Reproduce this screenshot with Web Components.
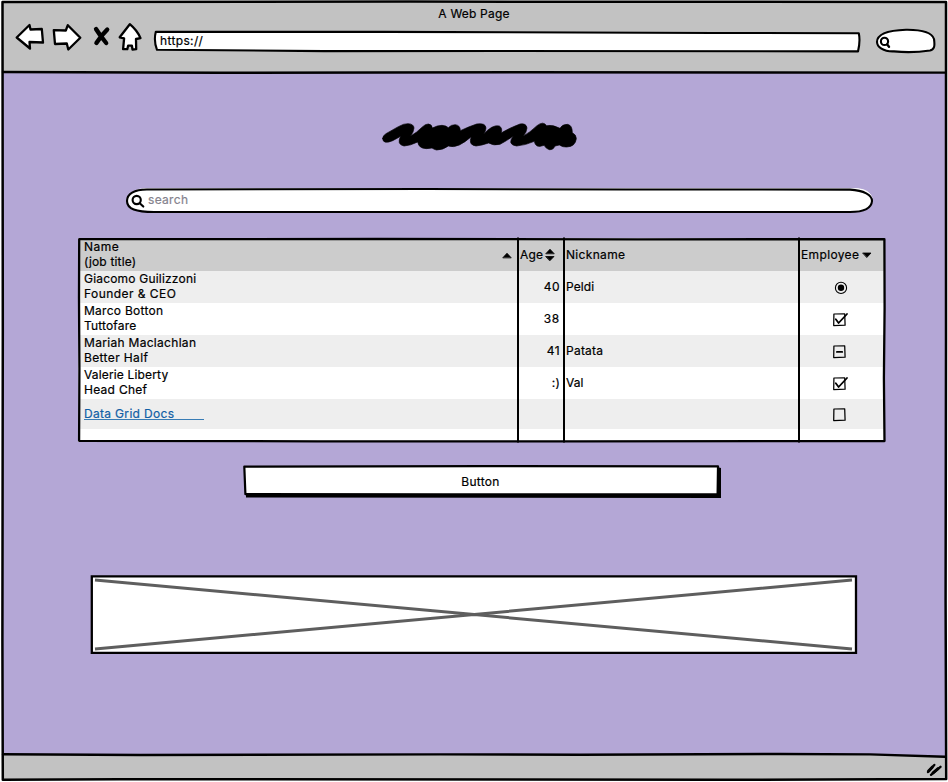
<!DOCTYPE html>
<html lang="en">
<head>
<meta charset="utf-8">
<title>A Web Page</title>
<style>
html,body{margin:0;padding:0}
body{width:948px;height:782px;overflow:hidden;background:#fff;color:#000;font:400 12px/15px Inter,"Liberation Sans",sans-serif}
</style>
</head>
<body>
<wire-browser>
  <fit-text slot="title" w="71">A Web Page</fit-text>
  <fit-text slot="url" w="43">https://</fit-text>
  <wire-scribble></wire-scribble>
  <wire-search><fit-text w="40">search</fit-text></wire-search>
  <wire-grid></wire-grid>
  <wire-button><fit-text w="38">Button</fit-text></wire-button>
  <wire-image></wire-image>
</wire-browser>
<script>
class WireElement extends HTMLElement {
  constructor() {
    super();
    this.attachShadow({ mode: 'open' }).innerHTML =
      '<style>:host,*{box-sizing:border-box}svg{display:block;overflow:visible;fill:none;stroke:#000;stroke-width:2.1;stroke-linecap:round;stroke-linejoin:round}.bg{position:absolute;left:0;top:0}' +
      this.constructor.css + '</style>' + this.constructor.html;
  }
}

/* Text label whose tracking is adjusted to fill the width in its "w" attribute. */
class FitText extends WireElement {
  static css = ':host{display:inline-block;position:relative;white-space:nowrap;line-height:15px;-webkit-text-stroke:.2px currentColor}span{display:inline-block}';
  static html = '<span><slot></slot></span>';
  connectedCallback() {
    requestAnimationFrame(() => this.fit());
    this.fit();
  }
  fit() {
    const w = +this.getAttribute('w');
    const s = this.shadowRoot.querySelector('span');
    const n = this.textContent.length;
    if (!w || !n) return;
    s.style.letterSpacing = '0';
    const natural = s.getBoundingClientRect().width;
    if (natural) s.style.letterSpacing = ((w + .3 - natural) / n).toFixed(3) + 'px';
  }
}

class WireBrowser extends WireElement {
  static css = `
  :host{display:grid;grid-template-rows:73px 682px 27px;position:relative;width:948px;height:782px}
  svg.bg{z-index:0}
  header,main,footer{position:relative}
  header{display:flex;flex-direction:column;align-items:center;padding-top:6px}
  nav{display:flex;width:100%;height:32px;padding-left:15px;align-items:flex-start;margin-top:2px}
  .icon{width:28px;height:30px;margin-right:9px;stroke-width:2.3}
  .icon.x{width:18px;margin:0 8px 0 3px}
  .icon.h{width:24px;margin-right:12px}
  .url{position:relative;width:707px;height:22px;margin-top:6px;padding:4px 0 0 6px;line-height:15px}
  .find{width:60px;height:26px;margin:5px 0 0 14px}
  main{display:flex;flex-direction:column}
  footer{display:flex;justify-content:flex-end;padding:7px 5px 0 0}`;
  static html = `
  <svg class="bg" width="948" height="782" viewBox="0 0 948 782">
    <path fill="#b4a7d6" stroke="none" d="M3 72H946V758H3z"/>
    <path fill="#c2c2c2" stroke="none" d="M3 2H946V72.5H3zM3 755L860 754L946 757V779.5H3z"/>
    <path stroke-width="2.5" d="M2.5 2L410 1.6L946 2L946 340L945.6 600L946.2 779L720 779.8L120 779.2L2.8 779.7L2.4 640L2.8 330z"/>
    <path stroke-width="2.4" d="M3 72L220 72.8L520 72.3L945 72.6M3 754.3L140 755L440 754.4L580 754.7L780 754L870 754.4L945 756.8"/>
  </svg>
  <header><slot name="title"></slot>
    <nav>
      <svg class="icon" viewBox="0 0 28 30"><path fill="#fff" d="M1.7 14.5L14.5 2L15.5 6.5L26.8 6L28 19.5L14.5 19L15 25.5z"/></svg>
      <svg class="icon" viewBox="0 0 28 30"><path fill="#fff" d="M1.8 7.2L13.8 7.5L15.8 2.2L28.3 14.8L16.3 26.5L14.8 20.5L3 21z"/></svg>
      <svg class="icon x" viewBox="0 0 18 30"><path stroke-width="4.3" d="M4 6Q8 12.5 14.2 20M15.2 6.6Q9.5 12 4.4 20"/></svg>
      <svg class="icon h" viewBox="0 0 24 30"><path fill="#fff" d="M11.8 1.2L1.7 14.3L6.1 15.3L5.1 26.2L9.3 26.2L10.1 22.7L13.9 22.7L14.5 26.5L18.2 26.2L18 16L22.5 15.1Q19 7.2 11.8 1.2z"/></svg>
      <div class="url"><svg class="bg" width="707" height="22"><path fill="#fff" d="M1.8 2.8L230 2.9L560 4L704.8 4.2Q706.5 12 704 22.4L350 22L170 22.1L3 20.8Q-.5 12 1.8 2.8z"/></svg><slot name="url"></slot></div>
      <svg class="find" viewBox="0 0 60 26"><path fill="#fff" d="M2 14C2 6.5 11 2.4 31 1.7C48 1.5 57 4.5 59 11C60 18 59.5 21.5 55 22.5Q37 25.2 19 23.4C8 23.8 2.2 19 2 14z"/><circle cx="9.5" cy="13.4" r="3.6"/><path stroke-width="2.4" d="M12.2 16.5L14 18.7"/></svg>
    </nav>
  </header>
  <main><slot></slot></main>
  <footer><svg width="17" height="15"><path stroke-width="2.4" d="M2 10L8.3 3M5 12.8L14.5 4.8"/><path stroke-width="3" d="M2.6 9L6.2 5.2M7 10.9L12 6.7"/></svg></footer>`;
}

class WireScribble extends WireElement {
  static css = ':host{display:block;width:200px;height:32px;margin:48px 0 0 380px}';
  static html = `<svg width="200" height="32" viewBox="30 33 600 96"><path fill="#000" stroke-width="2" d="M38 85Q39 76 48 71L85 50Q102 40 115 41Q131 42 132 54Q131 66 122 78Q140 68 158 50Q166 42 175 42Q186 43 187 54Q202 46 216 46Q229 47 235 53Q243 44 256 44Q271 46 271 62Q296 50 320 42Q347 38 348 54Q347 64 341 72Q352 60 365 52Q377 45 388 48Q399 55 393 69Q420 53 450 42Q469 39 471 54Q470 67 460 78Q479 68 501 47Q520 32 530 47Q548 43 570 55Q576 43 592 43Q607 45 607 68Q619 74 619 86Q616 110 590 111Q578 112 568 105L555 108Q550 120 538 119Q529 117 522 106Q496 116 493 94Q466 106 440 108Q410 104 430 78Q409 93 390 103Q371 108 356 99Q336 106 318 108Q294 105 304 80Q286 96 268 105Q250 113 235 108Q219 120 200 120Q193 119 186 114Q147 122 143 96Q121 107 102 108Q79 103 92 79L68 92Q38 105 38 85z"/></svg>`;
}

class WireSearch extends WireElement {
  static css = ':host{display:flex;position:relative;width:747px;height:25px;margin:35px 0 0 126px;padding:4px 0 0 22px;color:#85838d}';
  static html = `<svg class="bg" width="747" height="25"><path fill="#fff" stroke="#fff" stroke-width="1" d="M18 .7H732Q744 2 746 10L740 18H4L1 10Q7 1 18 .7z"/><path fill="#fff" d="M21 1.5L300 1L500 1.5L724 1.6C738 2.3 746 7 746 13C745.5 20 738 24 724 24H28C10 24 1 21 1 13C1 6 8 1.5 21 1.5z"/><circle cx="10.7" cy="12" r="4.1"/><path d="M14 15.5L17.3 18.6"/></svg><slot></slot>`;
}

class WireGrid extends WireElement {
  static css = `
  :host{display:block;position:relative;width:807px;height:204px;margin:25px 0 1px 78px;background:#fff;padding:1px 0 0 1px}
  .row{display:grid;grid-template-columns:439px 46px 235px 86px;height:32px;width:806px;align-items:center}
  .row.g{background:#eee}.row.head{background:#ccc}.row.last{height:30px}
  .row>div{display:flex;align-items:center;position:relative}
  fit-text{margin-top:-1px;margin-bottom:1px}
  .two{flex-direction:column;align-items:flex-start!important;padding-left:5px}
  .head .n{justify-content:space-between;padding-right:6px}
  .age{justify-content:flex-end;padding-right:4px}
  .head .age{justify-content:flex-start;padding:0 0 0 2px;gap:2px}
  .nick{padding-left:2px}
  .emp{justify-content:center;padding-right:4px}
  .head .emp{justify-content:flex-start;padding:0 0 0 2px;gap:3px}
  .row>.link{padding:0 0 2px 5px;color:#125fa5}
  .link u{display:block;text-decoration:none;width:120px;height:14px;border-bottom:1px solid #387cb5}
  .emp svg{stroke-width:1.25}
  svg.frame{position:absolute;left:0;top:0}
  .fill{fill:#000;stroke-width:.8}`;
  static html = (() => {
    const t = (s, w) => s ? `<fit-text w="${w}">${s}</fit-text>` : '';
    const box = '<path d="M2.9 4L13.7 3.8L14.1 15.2L2.7 15.6z"/>';
    const icon = {
      radio: '<circle cx="10" cy="9.9" r="5.6" stroke-width="1.1"/><circle cx="10" cy="9.8" r="3.2" fill="#000" stroke="none"/>',
      check: box + '<path stroke-width="1.8" d="M4.8 9.2L7.6 13L16 4"/>',
      dash: box + '<path stroke-width="1.8" d="M5.9 9.9H11.2"/>',
      empty: box
    };
    const cell = k => `<svg width="18" height="19">${icon[k]}</svg>`;
    const row = (g, a, aw, b, bw, age, agew, nick, nw, k) =>
      `<div class="row ${g}"><div class="two">${t(a, aw)}${t(b, bw)}</div><div class="age">${t(age, agew)}</div><div class="nick">${t(nick, nw)}</div><div class="emp">${cell(k)}</div></div>`;
    return `
    <div class="row head"><div class="n"><span class="two" style="display:flex">${t('Name', 35)}${t('(job title)', 52)}</span><svg width="10" height="7"><path class="fill" d="M1 5.6L5 1.2L9 5.6z"/></svg></div>
      <div class="age">${t('Age', 23)}<svg width="10" height="14"><path class="fill" d="M1 5.5L5 1.2L9 5.5zM1 8.5H9L5 12.6z"/></svg></div>
      <div class="nick">${t('Nickname', 59)}</div>
      <div class="emp">${t('Employee', 58)}<svg width="10" height="7"><path class="fill" d="M1 1H9L5 5.3z"/></svg></div></div>`
    + row('g', 'Giacomo Guilizzoni', 112, 'Founder &amp; CEO', 92, '40', 16, 'Peldi', 28, 'radio')
    + row('', 'Marco Botton', 79, 'Tuttofare', 52, '38', 16, '', 0, 'check')
    + row('g', 'Mariah Maclachlan', 112, 'Better Half', 64, '41', 13, 'Patata', 37, 'dash')
    + row('', 'Valerie Liberty', 84, 'Head Chef', 63, ':)', 8, 'Val', 17, 'check')
    + `<div class="row g last"><div class="link"><u>${t('Data Grid Docs', 90)}</u></div><div></div><div></div><div class="emp">${cell('empty')}</div></div>
    <svg class="frame" width="808" height="204"><path stroke-width="2.3" d="M1.2 1.2L300 1L560 1.3L806.4 1.2L806.6 70L805.9 140L806.5 203L500 203.4L240 203.3L1.1 202.8L1.4 130L1 60z"/><path stroke-width="2" stroke-linecap="butt" d="M440 -.5V204.5M486 -.5V204.5M721 -.5V204.5"/></svg>`;
  })();
}

class WireButton extends WireElement {
  static css = ':host{display:flex;position:relative;justify-content:center;align-items:center;width:477px;height:33px;margin:22px 0 0 243px;padding:0 2px 0 0}';
  static html = `<svg class="bg" width="477" height="33"><path fill="#000" stroke="none" d="M3 30H474V2L478 3V33L3 32.6z"/><path fill="#fff" stroke-width="2.2" d="M1.3 1.6L240 1.2L475 1.4L474.6 29.2L200 29.4L2.4 29.1z"/></svg><slot></slot>`;
}

class WireImage extends WireElement {
  static css = ':host{display:block;width:767px;height:80px;margin:77px 0 0 90px}';
  static html = `<svg width="767" height="80"><path fill="#fff" stroke-width="2.3" stroke-linejoin="miter" d="M1.8 1.3H766V77.8H1.8z"/><path stroke="#5e5e5e" stroke-width="3" stroke-linecap="butt" d="M5 5L762 74M5 74L762 5"/></svg>`;
}

customElements.define('fit-text', FitText);
customElements.define('wire-scribble', WireScribble);
customElements.define('wire-search', WireSearch);
customElements.define('wire-grid', WireGrid);
customElements.define('wire-button', WireButton);
customElements.define('wire-image', WireImage);
customElements.define('wire-browser', WireBrowser);
</script>
</body>
</html>
